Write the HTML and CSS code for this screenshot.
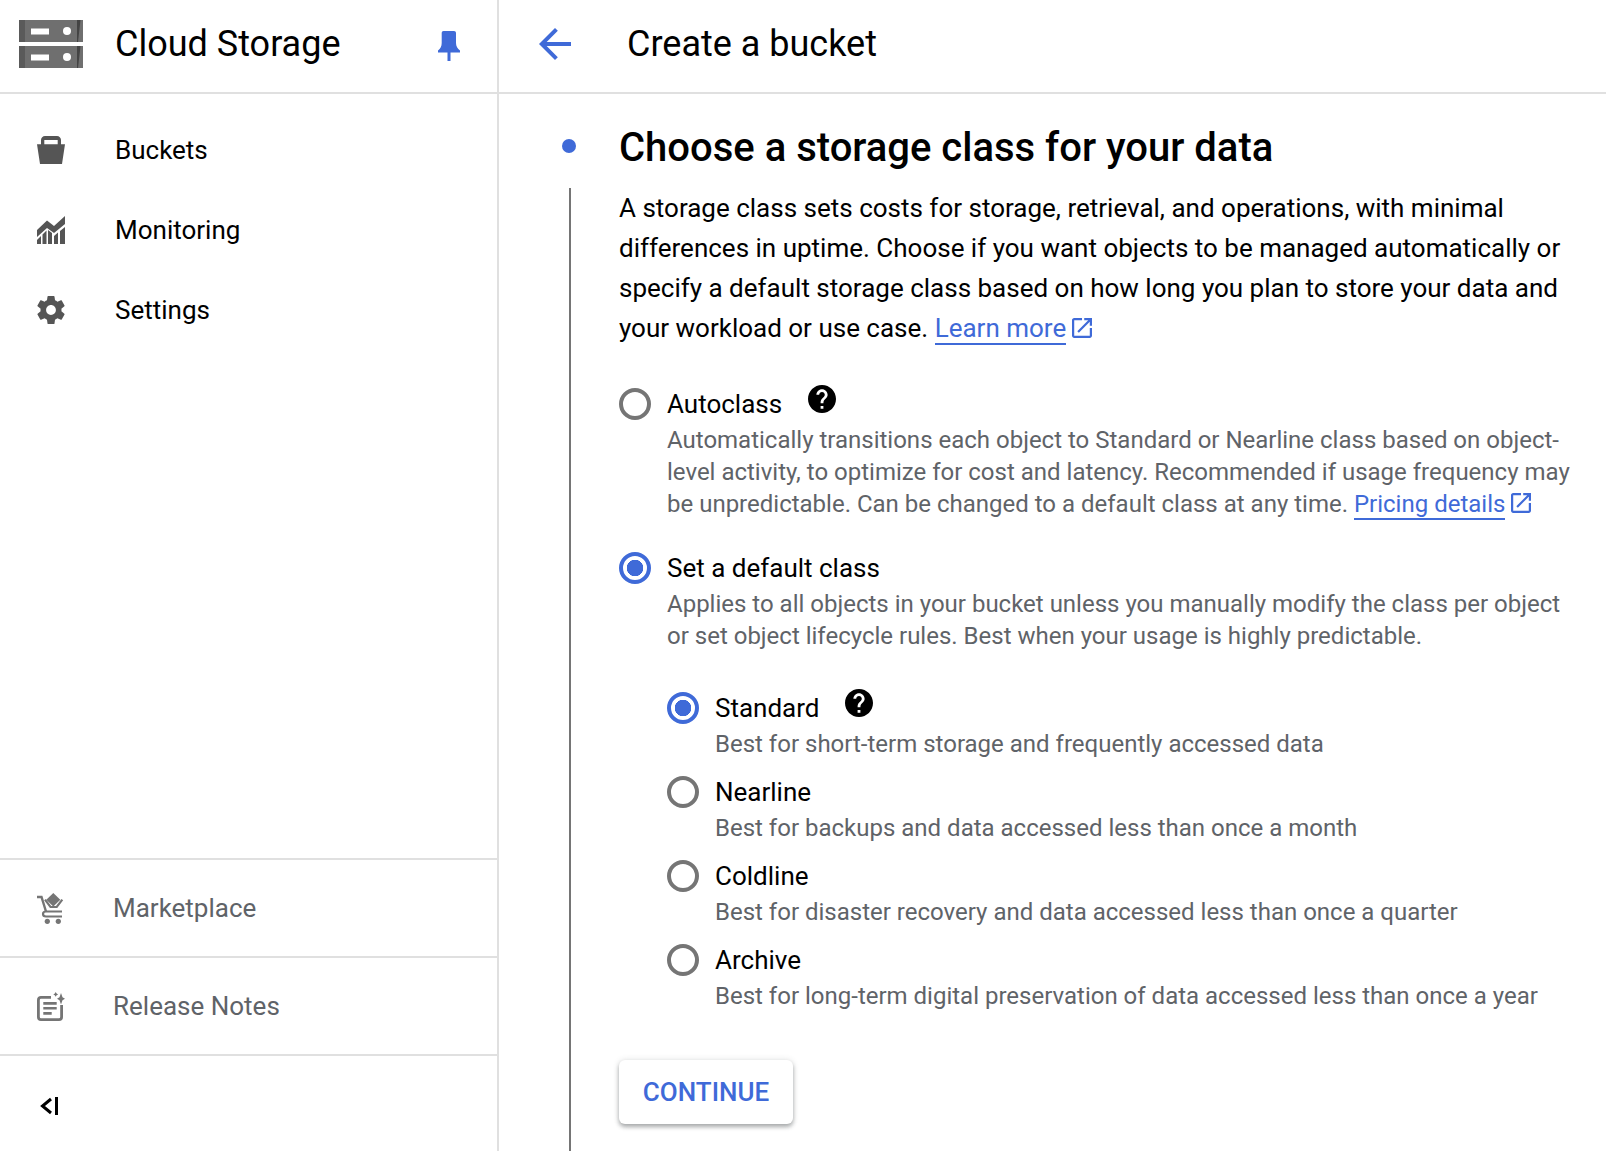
FILE: index.html
```html
<!DOCTYPE html>
<html lang="en">
<head>
<meta charset="utf-8">
<title>Create a bucket - Cloud Storage</title>
<link rel="stylesheet" href="styles.css">
</head>
<body>
<div class="app">
  <aside class="sidebar">
    <header class="side-head">
      <svg class="logo" viewBox="0 0 64 48" aria-hidden="true">
        <path fill="#6f6f6f" d="M0 0h64v22H0zM0 26h64v22H0z"/>
        <path fill="#5a5a5a" d="M0 0h6v22H0zM0 26h6v22H0z"/>
        <path fill="#444" d="M58 0h3.500L59 22h-1zM58 26h3.500L59 48h-1z"/>
        <path fill="#fff" d="M12 8.500h18V14.500H12zM12 34.500h18V40.500H12z"/>
        <circle fill="#fff" cx="48" cy="11" r="4"/><circle fill="#fff" cx="48" cy="37" r="4"/>
      </svg>
      <span class="product">Cloud Storage</span>
      <svg class="pin" viewBox="0 0 22 30" aria-hidden="true"><path d="M5.500 0H16c1.200 0 2 .8 2 2v10c0 3 1.500 5.500 4 7.500v2H12.500V30h-3v-8.500H0v-2c2.500-2 3.700-4.500 3.700-7.500V2C3.700.8 4.500 0 5.500 0z"/></svg>
    </header>
    <nav class="nav">
      <a class="nav-item">
        <svg class="nav-icon" viewBox="0 0 28 28" aria-hidden="true"><path fill-rule="evenodd" d="M4 8.300V4c0-2.200 1.800-4 4-4h12c2.200 0 4 1.800 4 4v4.300h4L25 28H3L0 8.300zM7.300 4v4.300h13.400V4z"/></svg>
        <span>Buckets</span>
      </a>
      <a class="nav-item">
        <svg class="nav-icon" viewBox="0 0 28 28" aria-hidden="true"><path d="M0 14l10-9.500 7 5.500L28 0v8l-11 9-7-5-10 9zM0 24l4-4v8H0zM5.500 18.500l4-4V28h-4zM11 14l4 3v11h-4zM17 20l4-3.500V28h-4zM23 15l5-4v17h-5z"/></svg>
        <span>Monitoring</span>
      </a>
      <a class="nav-item">
        <svg class="nav-icon" viewBox="2.500 2 19 20" aria-hidden="true"><path d="M19.430 12.980c.04-.32.070-.64.070-.98s-.03-.66-.07-.98l2.110-1.650c.19-.15.240-.42.120-.64l-2-3.460c-.12-.22-.39-.3-.61-.22l-2.490 1c-.52-.4-1.080-.73-1.690-.98l-.38-2.650C14.460 2.180 14.250 2 14 2h-4c-.25 0-.46.18-.49.42l-.38 2.650c-.61.25-1.170.59-1.690.98l-2.490-1c-.23-.09-.49 0-.61.22l-2 3.460c-.13.220-.07.490.12.640l2.110 1.650c-.04.320-.07.650-.07.980s.03.660.07.980l-2.110 1.650c-.19.150-.24.420-.12.640l2 3.460c.12.220.39.300.61.220l2.490-1c.52.400 1.080.730 1.690.980l.38 2.650c.03.240.24.420.49.420h4c.25 0 .46-.18.49-.42l.38-2.650c.61-.25 1.170-.59 1.690-.98l2.490 1c.23.090.49 0 .61-.22l2-3.460c.12-.22.070-.49-.12-.64l-2.110-1.650zM12 15.500c-1.930 0-3.500-1.570-3.500-3.500s1.570-3.500 3.500-3.500 3.500 1.570 3.500 3.500-1.570 3.500-3.500 3.500z"/></svg>
        <span>Settings</span>
      </a>
    </nav>
    <div class="side-foot">
      <a class="foot-item">
        <svg class="foot-icon market" viewBox="0 0 28 31" aria-hidden="true">
          <path d="M16.300 0l7 6.700-7 6.700-7-6.700z"/>
          <path fill="none" stroke="currentColor" stroke-width="2.400" d="M0 4h4.500L9 18.500"/>
          <path fill="none" stroke="currentColor" stroke-width="2.200" d="M8 6.700l5.500 7.300h6.200l5.600-7.300"/>
          <path fill="none" stroke="currentColor" stroke-width="2.200" d="M25 18.500H9c-2.500 0-3 1.500-3 2.500s.5 2.500 3 2.500h16"/>
          <circle cx="10.300" cy="28.300" r="2.600"/><circle cx="21.300" cy="28.300" r="2.600"/>
        </svg>
        <span>Marketplace</span>
      </a>
      <a class="foot-item">
        <svg class="foot-icon notes" viewBox="0 0 28 29" aria-hidden="true">
          <path fill="none" stroke="currentColor" stroke-width="2.800" d="M14 5.400H4c-1.600 0-2.600 1-2.600 2.600v17c0 1.600 1 2.600 2.600 2.600h18c1.600 0 2.600-1 2.600-2.600V13"/>
          <path d="M6.300 10h13.400v2.700H6.300zM6.300 15h13.400v2.400H6.300zM6.300 20h8.400v2.700H6.300z"/>
          <path d="M24 1l1.500 4.200L28 6.700l-2.500 1.500L24 12.400l-1.500-4.200L20 6.700l2.500-1.500zM18.700 0l.9 1.500 1.500.9-1.500.9-.9 1.500-.9-1.500-1.500-.9 1.500-.9z"/>
        </svg>
        <span>Release Notes</span>
      </a>
      <div class="collapse">
        <svg class="collapse-icon" viewBox="0 0 19 18" aria-hidden="true"><path fill="none" stroke="#000" stroke-width="3" d="M11 2L2.500 9l8.500 7"/><path d="M15 0h3v18h-3z"/></svg>
      </div>
    </div>
  </aside>

  <main class="main">
    <header class="main-head">
      <svg class="back" viewBox="4 4 16 16" aria-hidden="true"><path d="M20 11H7.830l5.590-5.590L12 4l-8 8 8 8 1.410-1.410L7.830 13H20v-2z"/></svg>
      <span class="page-title">Create a bucket</span>
    </header>
    <div class="step">
      <div class="rail"><span class="dot"></span><span class="line"></span></div>
      <section class="step-body">
        <h1 class="step-title">Choose a storage class for your data</h1>
        <p class="intro">A storage class sets costs for storage, retrieval, and operations, with minimal differences in uptime. Choose if you want objects to be managed automatically or specify a default storage class based on how long you plan to store your data and your workload or use case. <a class="link">Learn more</a><svg class="ext" viewBox="3 3 18 18" aria-hidden="true"><path d="M19 19H5V5h7V3H5c-1.110 0-2 .9-2 2v14c0 1.100.89 2 2 2h14c1.100 0 2-.9 2-2v-7h-2v7zM14 3v2h3.590l-9.830 9.830 1.410 1.410L19 6.410V10h2V3h-7z"/></svg></p>

        <div class="option autoclass">
          <span class="radio"></span>
          <div class="opt-text">
            <div class="opt-label">Autoclass<svg class="help" viewBox="2 2 20 20" aria-hidden="true"><path d="M12 2C6.480 2 2 6.480 2 12s4.480 10 10 10 10-4.480 10-10S17.520 2 12 2zm1 17h-2v-2h2v2zm2.070-7.750l-.9.920C13.450 12.900 13 13.500 13 15h-2v-.5c0-1.100.45-2.100 1.170-2.830l1.240-1.260c.37-.36.59-.86.59-1.410 0-1.100-.9-2-2-2s-2 .9-2 2H8c0-2.210 1.790-4 4-4s4 1.790 4 4c0 .88-.36 1.680-.93 2.250z"/></svg></div>
            <p class="opt-desc">Automatically transitions each object to Standard or Nearline class based on object-level activity, to optimize for cost and latency. Recommended if usage frequency may be unpredictable. Can be changed to a default class at any time. <a class="link">Pricing details</a><svg class="ext" viewBox="3 3 18 18" aria-hidden="true"><path d="M19 19H5V5h7V3H5c-1.110 0-2 .9-2 2v14c0 1.100.89 2 2 2h14c1.100 0 2-.9 2-2v-7h-2v7zM14 3v2h3.590l-9.830 9.830 1.410 1.410L19 6.410V10h2V3h-7z"/></svg></p>
          </div>
        </div>

        <div class="option default">
          <span class="radio on"></span>
          <div class="opt-text">
            <div class="opt-label">Set a default class</div>
            <p class="opt-desc">Applies to all objects in your bucket unless you manually modify the class per object or set object lifecycle rules. Best when your usage is highly predictable.</p>
          </div>
        </div>

        <div class="sub-options">
          <div class="option sub">
            <span class="radio on"></span>
            <div class="opt-text">
              <div class="opt-label">Standard<svg class="help" viewBox="2 2 20 20" aria-hidden="true"><path d="M12 2C6.480 2 2 6.480 2 12s4.480 10 10 10 10-4.480 10-10S17.520 2 12 2zm1 17h-2v-2h2v2zm2.070-7.750l-.9.920C13.450 12.900 13 13.500 13 15h-2v-.5c0-1.100.45-2.100 1.170-2.830l1.240-1.260c.37-.36.59-.86.59-1.410 0-1.100-.9-2-2-2s-2 .9-2 2H8c0-2.210 1.790-4 4-4s4 1.790 4 4c0 .88-.36 1.680-.93 2.250z"/></svg></div>
              <p class="opt-desc">Best for short-term storage and frequently accessed data</p>
            </div>
          </div>
          <div class="option sub">
            <span class="radio"></span>
            <div class="opt-text">
              <div class="opt-label">Nearline</div>
              <p class="opt-desc">Best for backups and data accessed less than once a month</p>
            </div>
          </div>
          <div class="option sub">
            <span class="radio"></span>
            <div class="opt-text">
              <div class="opt-label">Coldline</div>
              <p class="opt-desc">Best for disaster recovery and data accessed less than once a quarter</p>
            </div>
          </div>
          <div class="option sub">
            <span class="radio"></span>
            <div class="opt-text">
              <div class="opt-label">Archive</div>
              <p class="opt-desc">Best for long-term digital preservation of data accessed less than once a year</p>
            </div>
          </div>
        </div>

        <button class="continue" type="button">CONTINUE</button>
      </section>
    </div>
  </main>
</div>
</body>
</html>
```
FILE: styles.css
```css
* { box-sizing: border-box; }
html, body { margin: 0; height: 100%; overflow: hidden; background: #fff; }
body { font-family: Roboto, "Liberation Sans", sans-serif; color: #000; }
p, h1 { margin: 0; }
svg { display: block; flex: none; }

.app { display: flex; width: 1606px; height: 1151px; overflow: hidden; }

.sidebar {
  width: 499px;
  flex: none;
  display: flex;
  flex-direction: column;
  border-right: 2px solid #e0e0e0;
}
.side-head {
  height: 94px;
  flex: none;
  display: flex;
  align-items: center;
  padding: 0 37px 4px 19px;
  border-bottom: 2px solid #e0e0e0;
}
.logo { width: 64px; height: 48px; margin-right: 32px; }
.product { flex: 1; font-size: 36px; line-height: 44px; }
.pin { width: 22px; height: 30px; margin-top: 4px; fill: #3f6ad8; }

.nav { flex: 1; padding-top: 16px; }
.nav-item {
  height: 80px;
  display: flex;
  align-items: center;
  padding-left: 37px;
  font-size: 26px;
}
.nav-icon { width: 28px; height: 28px; margin-right: 50px; fill: #555; }

.foot-item {
  height: 98px;
  display: flex;
  align-items: center;
  padding-left: 37px;
  border-top: 2px solid #e0e0e0;
  color: #5f6368;
  font-size: 26px;
}
.foot-icon { width: 28px; margin-right: 49px; fill: currentColor; }
.foot-item span { margin-left: -1px; }
.market { height: 31px; color: #757575; }
.notes { height: 29px; color: #757575; }
.collapse {
  height: 97px;
  display: flex;
  align-items: center;
  padding: 4px 0 0 40px;
  border-top: 2px solid #e0e0e0;
}
.collapse-icon { width: 19px; height: 18px; }

.main { flex: 1; min-width: 0; display: flex; flex-direction: column; }
.main-head {
  height: 94px;
  flex: none;
  display: flex;
  align-items: center;
  padding: 0 0 4px 40px;
  border-bottom: 2px solid #e0e0e0;
}
.back { width: 32px; height: 32px; margin-right: 56px; fill: #3f6ad8; }
.page-title { font-size: 36px; line-height: 44px; }

.step { flex: 1; min-height: 0; display: flex; }
.rail {
  width: 120px;
  flex: none;
  display: flex;
  flex-direction: column;
  align-items: flex-end;
  padding: 45px 48px 0 0;
}
.dot { width: 14px; height: 14px; margin-right: -5px; border-radius: 50%; background: #3f6ad8; }
.line { width: 2px; flex: 1; margin-top: 35px; background: #757575; }

.step-body { flex: 1; min-width: 0; padding: 28px 30px 0 0; }
.step-title { font-size: 40px; line-height: 52px; font-weight: 500; margin-bottom: 14px; }
.intro { font-size: 26px; line-height: 40px; }
.link { color: #3f6ad8; border-bottom: 2px solid #3f6ad8; }
.ext { display: inline-block; width: 20px; height: 20px; margin-left: 6px; fill: #3f6ad8; vertical-align: -1px; }

.option { display: flex; align-items: flex-start; }
.opt-text { flex: 1; min-width: 0; }
.radio {
  width: 32px;
  height: 32px;
  flex: none;
  margin-right: 16px;
  border: 4px solid #757575;
  border-radius: 50%;
  background: #fff;
}
.radio.on { border-color: #3f6ad8; background: radial-gradient(circle, #3f6ad8 0 8px, #fff 8.500px); }
.opt-label {
  display: flex;
  font-size: 26px;
  line-height: 32px;
  height: 32px;
}
.opt-desc { font-size: 24px; line-height: 32px; color: #5f6368; margin-top: 4px; }
.help { width: 28px; height: 28px; margin: -3px 0 0 26px; fill: #000; }

.autoclass { margin-top: 40px; }
.default { margin-top: 32px; }
.sub-options { margin-top: 40px; padding-left: 48px; }
.sub { height: 84px; }
.continue {
  display: block;
  width: 174px;
  height: 64px;
  margin-top: 32px;
  padding: 0;
  border: 0;
  border-radius: 6px;
  background: #fff;
  color: #3f6ad8;
  font-family: inherit;
  font-size: 26px;
  font-weight: 500;
  box-shadow: 0 3px 4px rgba(60,64,67,.4), 0 0 6px rgba(60,64,67,.15);
}
```
